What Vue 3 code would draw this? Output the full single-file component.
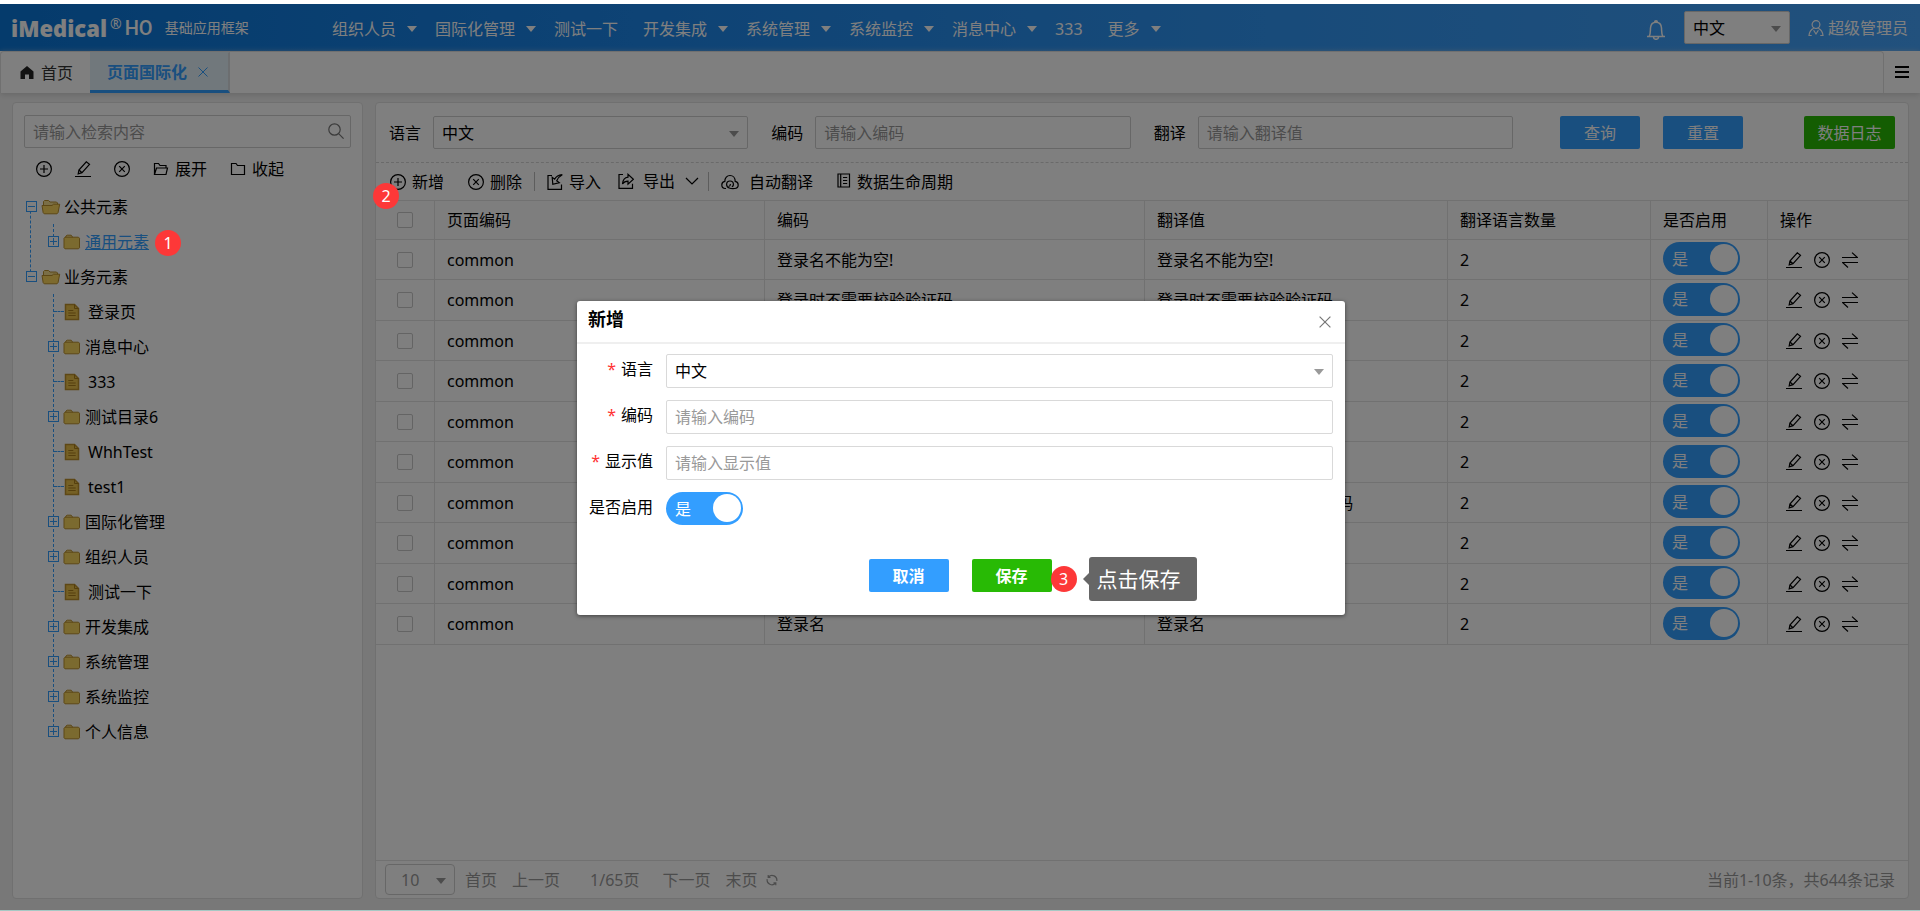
<script setup>
import { ref } from 'vue'

const navItems = [
  { label: '组织人员', menu: true },
  { label: '国际化管理', menu: true },
  { label: '测试一下', menu: false },
  { label: '开发集成', menu: true },
  { label: '系统管理', menu: true },
  { label: '系统监控', menu: true },
  { label: '消息中心', menu: true },
  { label: '333', menu: false },
  { label: '更多', menu: true },
]

const tree = [
  {
    label: '公共元素',
    children: [{ label: '通用元素', type: 'folder', active: true, step: 1 }],
  },
  {
    label: '业务元素',
    children: [
      { label: '登录页', type: 'file' },
      { label: '消息中心', type: 'folder' },
      { label: '333', type: 'file' },
      { label: '测试目录6', type: 'folder' },
      { label: 'WhhTest', type: 'file' },
      { label: 'test1', type: 'file' },
      { label: '国际化管理', type: 'folder' },
      { label: '组织人员', type: 'folder' },
      { label: '测试一下', type: 'file' },
      { label: '开发集成', type: 'folder' },
      { label: '系统管理', type: 'folder' },
      { label: '系统监控', type: 'folder' },
      { label: '个人信息', type: 'folder' },
    ],
  },
]

const texts = [
  ['登录名不能为空!', '登录名不能为空!'],
  ['登录时不需要校验验证码', '登录时不需要校验验证码'],
  ['', ''],
  ['', ''],
  ['', ''],
  ['', ''],
  ['', '登录失败时,需要输入验证码'],
  ['', ''],
  ['', ''],
  ['登录名', '登录名'],
]
const rows = ref(
  texts.map(([code, value], i) => ({ id: i + 1, page: 'common', code, value, count: 2, enabled: true, checked: false }))
)
const enabled = ref(true)
</script>

<template>
  <div class="page">
    <svg class="sprite" aria-hidden="true">
      <symbol id="i-plus" viewBox="0 0 16 16"><circle cx="8" cy="8" r="7.4" /><path d="M8 4v8M4 8h8" /></symbol>
      <symbol id="i-close-circle" viewBox="0 0 16 16"><circle cx="8" cy="8" r="7.4" /><path d="M5.2 5.2l5.6 5.6M10.800 5.200l-5.600 5.600" /></symbol>
      <symbol id="i-edit" viewBox="0 0 16 16"><path d="M0 15.5h16M3.200 12.800l.7-3.800 7.400-8.200 3.200 2.600-7.500 8.300zM4 9l3 2.700" /></symbol>
      <symbol id="i-swap" viewBox="0 0 16 16"><path d="M0 5.500h15.500L10 .6M16 10.500H.5L6 15.500" /></symbol>
      <symbol id="i-folder-open" viewBox="0 0 16 16"><path d="M1.500 13.500V2.500h4l1.500 2h6v2.500M1.500 13.500l2-6.500h11l-1.500 6.500z" /></symbol>
      <symbol id="i-folder" viewBox="0 0 16 16"><path d="M1.500 13.500v-11h4.500l1.500 2h7v9z" /></symbol>
      <symbol id="i-search" viewBox="0 0 16 16"><circle cx="6.500" cy="6.500" r="5.700" /><path d="M10.600 10.600l5 5" /></symbol>
      <symbol id="i-import" viewBox="0 0 16 16"><path d="M5 1.500H1v13.800h13.500V10.500M15.300.7c-3.800.4-6.300 2-7.700 4.500L5.200 3.300l.6 7 6.500-1.600-2.600-2c1-2.400 2.700-4.500 5.600-6z" /></symbol>
      <symbol id="i-export" viewBox="0 0 16 16"><path d="M5 1.500H1v13.800h13.500v-4.500M4.500 11c.3-3.800 2.300-6.500 5.500-6.900V1.300l5.400 5-5.400 4.800V8.200c-2.400 0-4.200.8-5.500 2.800z" /></symbol>
      <symbol id="i-down" viewBox="0 0 16 16"><path d="M2 5l6 6 6-6" /></symbol>
      <symbol id="i-cloud" viewBox="0 0 18 16"><path d="M5 14.500H4.300C2.300 14.300.8 12.900.8 10.900c0-2 1.500-3.300 3-3.500C3.800 4 6 1.500 9 1.500s5.200 2.500 5.200 5.900c1.700.3 3 1.700 3 3.500 0 2-1.600 3.400-3.600 3.600-3.700.3-8-.3-8-4 0-2 1.500-3.500 3.400-3.500s3.400 1.400 3.400 3.300c0 1.500-.8 2.300-1.600 2.300M7.600 12.500c1.200-.2 1.800-1 1.800-2.600" /></symbol>
      <symbol id="i-log" viewBox="0 0 14 16"><path d="M1 1h11.500v13H1zM3.700 1v13M6 4.500h4.200M6 7.500h4.200M6 10.500h4.200" /></symbol>
      <symbol id="i-bell" viewBox="0 0 20 20"><path d="M1 16.500h18M3.200 16.300C4.600 14 4.300 11 4.500 8c.3-3.500 2.500-5.700 5.500-5.700S15.200 4.500 15.500 8c.2 3-.1 6 1.300 8.300M8.600 2.200a1.400 1.400 0 0 1 2.800 0M7.500 17a2.500 2.300 0 0 0 5 0" /></symbol>
      <symbol id="i-user" viewBox="0 0 16 16"><circle cx="8" cy="4.600" r="3.900" /><path d="M5.700 8.200C3 9.500 1.300 12 1 15.500h2.700M10.300 8.200c2.700 1.300 4.400 3.800 4.700 7.300h-2.700M5.600 10.200L8 14l2.400-3.800" /></symbol>
      <symbol id="i-x" viewBox="0 0 12 12"><path d="M.6.600l10.800 10.800M11.400.600L.6 11.400" /></symbol>
      <symbol id="i-refresh" viewBox="0 0 12 12"><path d="M2.500 3A4.800 4.800 0 0 1 10.800 7M9.500 9.200A4.800 4.800 0 0 1 1.200 5.200M2.200 1v2.300h2.300M9.800 11.200V8.900H7.500" /></symbol>
      <symbol id="i-dir-open" viewBox="0 0 20 16"><path d="M2.500 7V2.500l1-1h4L9 3h6.500l1 1v3z" fill="#f5dc8c" stroke="#b98f2c" /><path d="M1 6.500h10l1.500-1.300h6.200L17 13.800l-1 1H3.200l-1-1z" fill="#fbd45c" stroke="#b98f2c" /></symbol>
      <symbol id="i-dir" viewBox="0 0 18 16"><path d="M2 4.500L3 2l1.200-.8h4L9.500 3v2z" fill="#f5dc8c" stroke="#b98f2c" /><path d="M1 4.200l1-1h13.500l1 1v9.600l-1 1H2l-1-1z" fill="#f7d45e" stroke="#b98f2c" /></symbol>
      <symbol id="i-file" viewBox="0 0 16 18"><path d="M1.500 1.500h9l4 4v11h-13z" fill="#eac04a" stroke="#bd902c" stroke-width="1.500" /><path d="M10.500 1.500v4h4M4.300 7.500h5M4.300 10h7.400M4.300 12.500h7.400" fill="none" stroke="#aa7e1c" /></symbol>
    </svg>

    <header class="topbar">
      <div class="brand">
        <strong>iMedical</strong><sup>®</sup><span class="ho">HO</span>
        <span class="sub">基础应用框架</span>
      </div>
      <nav class="nav">
        <a v-for="item in navItems" :key="item.label" href="#" :class="{ plain: !item.menu }">
          {{ item.label }}<i v-if="item.menu" class="caret"></i>
        </a>
      </nav>
      <div class="account">
        <button class="bare" type="button" aria-label="消息"><svg class="line bell"><use href="#i-bell" /></svg></button>
        <span class="select lang">
          <select aria-label="语言"><option>中文</option></select>
        </span>
        <a href="#" class="user"><svg class="line"><use href="#i-user" /></svg>超级管理员</a>
      </div>
    </header>

    <div class="tabbar">
      <div class="tabs">
        <button type="button" class="tab home">
          <svg viewBox="0 0 14 13" class="house"><path d="M7 0L.5 5.500V13H5V8.500h4V13h4.500V5.500z" /></svg>首页
        </button>
        <button type="button" class="tab active">
          页面国际化<svg class="line tab-x"><use href="#i-x" /></svg>
        </button>
      </div>
      <button type="button" class="burger" aria-label="菜单"><i></i><i></i><i></i></button>
    </div>

    <main class="main">
      <aside class="panel side">
        <div class="search">
          <input type="text" placeholder="请输入检索内容" aria-label="检索" />
          <svg class="line"><use href="#i-search" /></svg>
        </div>
        <div class="side-tools">
          <button type="button" aria-label="新增"><svg class="line"><use href="#i-plus" /></svg></button>
          <button type="button" aria-label="编辑"><svg class="line"><use href="#i-edit" /></svg></button>
          <button type="button" aria-label="删除"><svg class="line"><use href="#i-close-circle" /></svg></button>
          <button type="button"><svg class="line"><use href="#i-folder-open" /></svg>展开</button>
          <button type="button"><svg class="line"><use href="#i-folder" /></svg>收起</button>
        </div>
        <ul class="tree">
          <li v-for="root in tree" :key="root.label" class="root">
            <div class="node">
              <i class="toggle minus"></i>
              <svg class="dir-open"><use href="#i-dir-open" /></svg>
              <span>{{ root.label }}</span>
            </div>
            <ul class="leafs">
              <li v-for="n in root.children" :key="n.label" class="node" :class="n.type">
                <i v-if="n.type === 'folder'" class="toggle"></i>
                <i v-else class="dash"></i>
                <svg v-if="n.type === 'folder'" class="dir"><use href="#i-dir" /></svg>
                <svg v-else class="doc"><use href="#i-file" /></svg>
                <a v-if="n.active" href="#" class="current">{{ n.label }}<b class="step step-one">{{ n.step }}</b></a>
                <span v-else>{{ n.label }}</span>
              </li>
            </ul>
          </li>
        </ul>
      </aside>

      <section class="panel content">
        <form class="query" @submit.prevent>
          <div class="field">
            <label for="q-lang">语言</label>
            <span class="select"><select id="q-lang"><option>中文</option></select></span>
          </div>
          <div class="field">
            <label for="q-code">编码</label>
            <input id="q-code" type="text" placeholder="请输入编码" />
          </div>
          <div class="field">
            <label for="q-text">翻译</label>
            <input id="q-text" type="text" placeholder="请输入翻译值" />
          </div>
          <div class="query-actions">
            <button type="submit" class="btn">查询</button>
            <button type="reset" class="btn">重置</button>
            <button type="button" class="btn green log">数据日志</button>
          </div>
        </form>

        <div class="tools">
          <button type="button"><svg class="line"><use href="#i-plus" /></svg>新增</button>
          <button type="button" class="before-bar"><svg class="line"><use href="#i-close-circle" /></svg>删除</button>
          <i class="bar"></i>
          <button type="button" class="import"><svg class="line"><use href="#i-import" /></svg>导入</button>
          <button type="button" class="export"><svg class="line"><use href="#i-export" /></svg>导出<svg class="line"><use href="#i-down" /></svg></button>
          <i class="bar"></i>
          <button type="button" class="wide"><svg class="line cloud"><use href="#i-cloud" /></svg>自动翻译</button>
          <button type="button"><svg class="line book"><use href="#i-log" /></svg>数据生命周期</button>
          <b class="step step-two">2</b>
        </div>

        <div class="grid">
          <table>
            <colgroup>
              <col class="c-check" /><col class="c-page" /><col class="c-code" /><col class="c-value" />
              <col class="c-count" /><col class="c-on" /><col class="c-op" />
            </colgroup>
            <thead>
              <tr>
                <th class="check"><input type="checkbox" aria-label="全选" /></th>
                <th>页面编码</th><th>编码</th><th>翻译值</th><th>翻译语言数量</th><th>是否启用</th><th>操作</th>
              </tr>
            </thead>
            <tbody>
              <tr v-for="r in rows" :key="r.id">
                <td class="check"><input v-model="r.checked" type="checkbox" aria-label="选择" /></td>
                <td>{{ r.page }}</td>
                <td>{{ r.code }}</td>
                <td>{{ r.value }}</td>
                <td>{{ r.count }}</td>
                <td class="on">
                  <label class="switch"><input v-model="r.enabled" type="checkbox" /><span>是</span></label>
                </td>
                <td>
                  <div class="ops">
                    <button type="button" aria-label="编辑"><svg class="line"><use href="#i-edit" /></svg></button>
                    <button type="button" aria-label="删除"><svg class="line"><use href="#i-close-circle" /></svg></button>
                    <button type="button" aria-label="转换"><svg class="line"><use href="#i-swap" /></svg></button>
                  </div>
                </td>
              </tr>
            </tbody>
          </table>
        </div>

        <footer class="pager">
          <span class="select size"><select aria-label="每页条数"><option>10</option></select></span>
          <a href="#">首页</a>
          <a href="#">上一页</a>
          <span class="count">1/65页</span>
          <a href="#">下一页</a>
          <a href="#" class="last">末页</a>
          <button type="button" class="bare" aria-label="刷新"><svg class="line reload"><use href="#i-refresh" /></svg></button>
          <span class="total">当前1-10条，共644条记录</span>
        </footer>
      </section>
    </main>

    <div class="mask">
      <div class="dialog" role="dialog" aria-labelledby="dlg-title">
        <div class="dlg-head">
          <h2 id="dlg-title">新增</h2>
          <button type="button" class="bare" aria-label="关闭"><svg class="line"><use href="#i-x" /></svg></button>
        </div>
        <form class="dlg-body" @submit.prevent>
          <label for="d-lang" class="req">语言</label>
          <span class="select"><select id="d-lang"><option>中文</option></select></span>
          <label for="d-code" class="req">编码</label>
          <input id="d-code" type="text" placeholder="请输入编码" />
          <label for="d-text" class="req">显示值</label>
          <input id="d-text" type="text" placeholder="请输入显示值" />
          <label for="d-on">是否启用</label>
          <div class="switch"><input id="d-on" v-model="enabled" type="checkbox" /><span>是</span></div>
        </form>
        <div class="dlg-foot">
          <button type="button" class="btn">取消</button>
          <div class="save">
            <button type="button" class="btn green">保存</button>
            <b class="step step-three">3</b>
            <span class="tip">点击保存</span>
          </div>
        </div>
      </div>
    </div>
  </div>
</template>

<style>
body {
  margin: 0;
  background: #fff;
}
</style>

<style scoped>
.page {
  position: relative;
  display: flex;
  flex-direction: column;
  box-sizing: border-box;
  min-height: 100vh;
  border-top: 4px solid #fff;
  border-bottom: 1px solid #a6c8c4;
  background: #f1f1f1;
  color: #000;
  font: 16px/20px "Noto Sans", "Noto Sans CJK SC", sans-serif;
}
.page *,
.page *::before,
.page *::after {
  box-sizing: border-box;
}
.sprite {
  position: absolute;
  width: 0;
  height: 0;
}
button,
input,
select {
  margin: 0;
  font: inherit;
  color: inherit;
}
button {
  display: inline-flex;
  align-items: center;
  padding: 0;
  border: 0;
  background: none;
  cursor: pointer;
}
a {
  color: inherit;
  text-decoration: none;
}
svg {
  flex: none;
  width: 16px;
  height: 16px;
}
.line {
  fill: none;
  stroke: currentColor;
  stroke-width: 1.2;
}
input[type='text'],
select {
  width: 100%;
  height: 33px;
  padding: 0 8px;
  border: 1px solid #cfcfcf;
  border-radius: 2px;
  outline: 0;
  background: #fff;
  appearance: none;
}
input::placeholder {
  color: #999;
  opacity: 1;
}
.select {
  position: relative;
  display: block;
}
.select::after {
  content: '';
  position: absolute;
  top: 50%;
  right: 9px;
  margin-top: -2px;
  border: 5px solid transparent;
  border-top: 6px solid #999;
  border-bottom: 0;
}
.btn {
  justify-content: center;
  width: 80px;
  height: 33px;
  border-radius: 2px;
  background: #339eff;
  color: #fff;
}
.btn.green {
  background: #28ba05;
}

/* top bar */
.topbar {
  display: flex;
  align-items: center;
  height: 47px;
  background: linear-gradient(90deg, #0a76d8, #1c86ea 33%, #3096f4 66%, #44a2fa);
  color: #fff;
}
.brand {
  display: flex;
  align-items: center;
  width: 332px;
  padding-left: 11px;
}
.brand strong {
  font: 800 22px/28px "Open Sans", sans-serif;
}
.brand sup {
  padding: 0 3px 8px;
  font-size: 14px;
  line-height: 14px;
}
.brand .ho {
  font: 500 20px/24px Roboto, sans-serif;
}
.brand .sub {
  padding-left: 12px;
  font-size: 14px;
}
.nav {
  display: flex;
  flex: 1;
  gap: 18px;
  padding-top: 3px;
}
.nav a {
  display: flex;
  align-items: center;
  white-space: nowrap;
}
.nav a.plain {
  padding-right: 7px;
}
.caret {
  margin-left: 11px;
  border: 5px solid transparent;
  border-top: 6px solid #fff;
  border-bottom: 0;
}
.account {
  display: flex;
  align-items: center;
  padding-right: 12px;
}
.bell {
  width: 20px;
  height: 20px;
  margin: 4px 18px 0 0;
  stroke-width: 1.5;
}
.lang {
  width: 106px;
  margin-right: 18px;
  color: #000;
}
.user {
  display: flex;
  align-items: center;
  gap: 4px;
}

/* tabs */
.tabbar {
  position: relative;
  display: flex;
  height: 42px;
  background: #fff;
  box-shadow: 0 2px 6px #d0d0d0;
}
.tabs {
  display: flex;
  flex: 1;
  border: 1px solid #e0e0e0;
  border-bottom: 0;
  border-radius: 4px 4px 0 0;
}
.tab {
  gap: 11px;
  padding: 0 17px;
  color: #333;
}
.home {
  gap: 7px;
  padding: 0 17px 0 19px;
}
.tab.active {
  width: 140px;
  border-top: 1px solid transparent;
  border-right: 2px solid #d8dce0;
  border-bottom: 3px solid #339eff;
  background: #e3f0f9;
  color: #339eff;
  font-weight: 700;
}
.house {
  width: 14px;
  height: 13px;
  fill: #222;
}
.tab-x {
  width: 10px;
  height: 10px;
}
.burger {
  flex-direction: column;
  justify-content: center;
  gap: 2px;
  width: 36px;
}
.burger i {
  width: 14px;
  height: 3px;
  border-bottom: 1px solid #fff;
  background: #000;
}

/* layout */
.main {
  display: flex;
  flex: 1;
  gap: 12px;
  padding: 9px 11px 11px 12px;
}
.panel {
  border: 1px solid #e0e0e0;
  border-radius: 4px;
  background: #fff;
}
.side {
  flex: none;
  width: 351px;
  padding: 12px 11px;
}
.search {
  position: relative;
}
.search svg {
  position: absolute;
  top: 8px;
  right: 7px;
  color: #777;
}
.side-tools {
  display: flex;
  align-items: center;
  gap: 23px;
  height: 41px;
  padding-left: 12px;
}
.side-tools button {
  gap: 6px;
}

/* tree */
.tree,
.tree ul {
  margin: 0;
  padding: 0;
  list-style: none;
}
.root,
.leafs {
  position: relative;
}
.root:not(:last-child)::before {
  content: '';
  position: absolute;
  top: 12px;
  bottom: -23px;
  left: 6px;
  border-left: 1px dashed #339eff;
}
.leafs::before {
  content: '';
  position: absolute;
  top: 0;
  bottom: 12px;
  left: 29px;
  border-left: 1px dashed #339eff;
}
.node {
  display: flex;
  align-items: center;
  height: 35px;
  padding-left: 2px;
}
.leafs .node {
  padding-left: 24px;
}
.toggle {
  position: relative;
  flex: none;
  width: 11px;
  height: 11px;
  border: 1px solid #339eff;
  background:
    linear-gradient(#339eff, #339eff) center / 7px 1px no-repeat,
    linear-gradient(#339eff, #339eff) center / 1px 7px no-repeat,
    #fff;
}
.toggle.minus {
  background: linear-gradient(#339eff, #339eff) center / 7px 1px no-repeat, #fff;
}
.dir-open {
  width: 20px;
  margin: 0 3px 0 4px;
}
.dir {
  width: 18px;
  margin: 0 4px;
}
.dash {
  width: 10px;
  margin-left: 6px;
  border-top: 1px dashed #339eff;
}
.doc {
  height: 18px;
  margin-right: 8px;
}
.current {
  position: relative;
  color: #339eff;
  text-decoration: underline;
}

/* step badges */
.step {
  position: absolute;
  z-index: 20;
  display: flex;
  align-items: center;
  justify-content: center;
  width: 26px;
  height: 26px;
  border-radius: 50%;
  background: #fd3838;
  color: #fff;
  font-weight: 400;
}
.step-one {
  top: -2px;
  left: 100%;
  margin-left: 6px;
}
.step-two {
  top: 20px;
  left: -3px;
}
.step-three {
  top: 7px;
  left: 100%;
  margin-left: -1px;
}

/* query form */
.content {
  display: flex;
  flex: 1;
  flex-direction: column;
  min-width: 0;
}
.query {
  display: flex;
  gap: 23px;
  padding: 13px;
  border-bottom: 1px dashed #d5d5d5;
}
.field {
  display: flex;
  flex: 1;
  align-items: center;
  gap: 12px;
}
.field label {
  flex: none;
}
.field .select {
  flex: 1;
}
.query-actions {
  display: flex;
  gap: 23px;
  padding-left: 24px;
}
.query-actions .log {
  width: 91px;
  margin-left: 38px;
}

/* table toolbar */
.tools {
  position: relative;
  display: flex;
  align-items: center;
  height: 38px;
  padding-left: 14px;
  border-bottom: 1px solid #e2e2e2;
}
.tools button {
  gap: 6px;
  margin-right: 24px;
}
.tools .before-bar {
  margin-right: 12px;
}
.tools .import {
  margin-right: 17px;
}
.tools .export {
  gap: 9px;
  margin-right: 8px;
  padding-bottom: 2px;
}
.tools .wide {
  gap: 10px;
}
.bar {
  width: 1px;
  height: 19px;
  margin-right: 12px;
  background: #bbb;
}
.cloud {
  width: 18px;
}
.book {
  width: 14px;
  margin-bottom: 2px;
}

/* table */
.grid {
  flex: 1;
}
table {
  width: 100%;
  border-collapse: separate;
  border-spacing: 0;
  table-layout: fixed;
}
.c-check { width: 59px; }
.c-page { width: 330px; }
.c-code { width: 380px; }
.c-value { width: 303px; }
.c-count { width: 203px; }
.c-on { width: 117px; }
.c-op { width: 140px; }
th,
td {
  height: 40px;
  padding: 0 11px 0 12px;
  border-right: 1px solid #e2e2e2;
  border-bottom: 1px solid #e2e2e2;
  font-weight: 400;
  text-align: left;
  white-space: nowrap;
}
th {
  height: 39px;
  background: #fcfcfc;
}
th:last-child,
td:last-child {
  border-right: 0;
}
tbody tr:nth-child(even) td {
  height: 41px;
}
.check {
  padding: 0;
  text-align: center;
}
.check input {
  display: block;
  width: 16px;
  height: 16px;
  margin: 0 auto;
  border: 1px solid #c8c8c8;
  border-radius: 2px;
  background: #fff;
  appearance: none;
}
.on {
  padding: 2px 12px 4px;
}
.switch {
  position: relative;
  display: flex;
  align-items: center;
  width: 77px;
  height: 33px;
  padding-left: 9px;
  border-radius: 17px;
  background: #339eff;
  color: #fff;
}
.switch input {
  position: absolute;
  top: 2px;
  right: 2px;
  width: 28px;
  height: 28px;
  border-radius: 50%;
  background: #fff;
  appearance: none;
}
.ops {
  display: flex;
  gap: 12px;
  padding-left: 6px;
}

/* pager */
.pager {
  display: flex;
  align-items: center;
  height: 38px;
  padding: 0 13px 0 9px;
  border-top: 1px solid #e2e2e2;
  color: #999;
}
.pager a {
  margin-right: 15px;
}
.pager .last {
  margin-right: 9px;
}
.size {
  width: 70px;
  margin-right: 10px;
}
.size select {
  height: 31px;
  padding-left: 15px;
  border-radius: 4px;
}
.pager .count {
  margin: 0 23px 0 15px;
}
.reload {
  width: 12px;
  height: 12px;
}
.total {
  margin-left: auto;
}

/* dialog */
.mask {
  position: absolute;
  inset: 0;
  z-index: 10;
  display: flex;
  align-items: center;
  justify-content: center;
  padding: 2px 0 0 2px;
  background: rgba(0, 0, 0, 0.5);
}
.dialog {
  position: relative;
  width: 768px;
  border-radius: 3px;
  background: #fff;
  box-shadow: 0 1px 4px rgba(0, 0, 0, 0.5);
}
.dlg-head {
  display: flex;
  align-items: center;
  justify-content: space-between;
  height: 43px;
  padding: 0 14px 0 11px;
  border-bottom: 2px solid #efefef;
}
.dlg-head h2 {
  margin: 0;
  padding-bottom: 5px;
  font-size: 18px;
  line-height: 24px;
}
.dlg-head svg {
  width: 12px;
  height: 12px;
  color: #777;
}
.dlg-body {
  display: grid;
  grid-template-columns: 65px 1fr;
  gap: 12px 13px;
  padding: 10px 12px 0 11px;
}
.dlg-body > label {
  padding-top: 5px;
  text-align: right;
  white-space: nowrap;
}
.dlg-body input[type='text'],
.dlg-body select {
  height: 34px;
  border-color: #d9d9d9;
}
.req::before {
  content: '*';
  margin-right: 5px;
  color: #f33;
}
.dlg-foot {
  display: flex;
  justify-content: center;
  gap: 23px;
  padding: 34px 2px 23px 0;
}
.dlg-foot .btn {
  font-weight: 700;
}
.save {
  position: relative;
}
.tip {
  position: absolute;
  top: -2px;
  left: 117px;
  padding: 10px 16px 10px 8px;
  border-radius: 3px;
  background: #666;
  color: #fff;
  font-size: 21px;
  line-height: 24px;
  white-space: nowrap;
}
.tip::before {
  content: '';
  position: absolute;
  top: 16px;
  left: -6px;
  border: 6px solid transparent;
  border-right-color: #666;
  border-left: 0;
}
</style>
